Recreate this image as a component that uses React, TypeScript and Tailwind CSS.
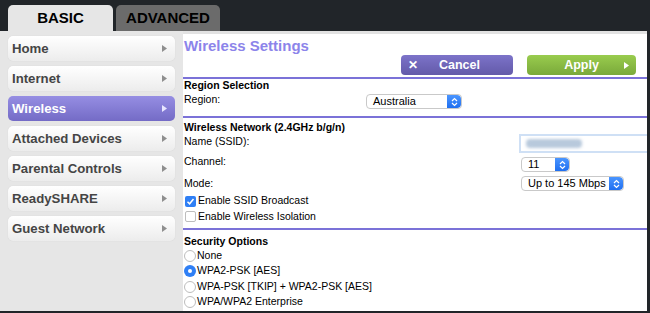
import React from "react";

const Arrow = ({ color = "#8a8a8a", w = 5, h = 7 }: { color?: string; w?: number; h?: number }) => (
  <svg width={w} height={h} viewBox={`0 0 ${w} ${h}`}><path d={`M0 0 L${w} ${h / 2} L0 ${h} Z`} fill={color} /></svg>
);

const Stepper = () => (
  <div className="w-[14px] self-stretch rounded-r-[4px] bg-gradient-to-b from-[#4a95ff] to-[#1f6ff0] flex items-center justify-center">
    <svg width="7" height="10" viewBox="0 0 7 10">
      <path d="M1 4 L3.5 1.5 L6 4 M1 6 L3.5 8.5 L6 6" stroke="white" strokeWidth="1.2" fill="none" />
    </svg>
  </div>
);

const Select = ({ w, text, extra = "" }: { w: string; text: string; extra?: string }) => (
  <div className={`${w} ${extra} h-[15px] flex items-stretch rounded-[4px] border border-[#c9c9c9] bg-white text-[11px] text-black overflow-hidden`}>
    <div className="flex-1 flex items-center pl-[6px]">{text}</div>
    <Stepper />
  </div>
);

const menu = ["Home", "Internet", "Wireless", "Attached Devices", "Parental Controls", "ReadySHARE", "Guest Network"];

const Line = () => <div className="h-[2px] bg-[#7b72d8] shrink-0" />;

const Radio = ({ checked, label }: { checked?: boolean; label: string }) => (
  <div className="h-[15.5px] flex items-center gap-[1px]">
    {checked ? (
      <div className="w-[12px] h-[12px] rounded-full bg-[#2f7ff5] flex items-center justify-center">
        <div className="w-[4px] h-[4px] rounded-full bg-white" />
      </div>
    ) : (
      <div className="w-[12px] h-[12px] rounded-full border border-[#bdbdbd] bg-white" />
    )}
    <span>{label}</span>
  </div>
);

export default function App() {
  return (
    <div className="w-[650px] h-[313px] overflow-hidden bg-[#212529] flex flex-col" style={{ fontFamily: '"Liberation Sans", Arial, sans-serif' }}>
      <div className="h-[31px] flex items-end pl-[8px] gap-[3px] shrink-0">
        <div className="w-[105px] h-[26px] rounded-t-[5px] bg-[#e6e6e6] flex items-center justify-center text-[15px] font-bold text-black">BASIC</div>
        <div className="w-[104px] h-[26px] rounded-t-[5px] bg-[#6b6b6b] flex items-center justify-center text-[15px] font-bold text-black">ADVANCED</div>
      </div>
      <div className="flex-1 flex mr-[3px] mb-[2px] min-h-0">
        <div className="w-[183px] bg-[#e6e6e6] shrink-0 flex flex-col gap-[5px] pt-[5px] pl-[8px] pr-[8px]">
          {menu.map((m) => {
            const active = m === "Wireless";
            return (
              <div
                key={m}
                className={`h-[25px] rounded-[5px] flex items-center justify-between pl-[4px] pr-[8px] text-[13.2px] font-bold ${
                  active
                    ? "bg-gradient-to-b from-[#968ee3] to-[#746bc6] text-white"
                    : "bg-gradient-to-b from-white to-[#ececec] text-[#454545] shadow-[0_0_1px_rgba(0,0,0,0.15)]"
                }`}
              >
                <span>{m}</span>
                <Arrow color={active ? "#e8e6ff" : "#8f8f8f"} />
              </div>
            );
          })}
        </div>
        <div className="flex-1 bg-white border-t-[3px] border-[#e2e2e2] flex flex-col text-[10.5px] text-black min-w-0">
          <div className="h-[21px] shrink-0 pl-[1px] pt-[4px] text-[15px] font-bold text-[#8c84ea] leading-none">Wireless Settings</div>
          <div className="h-[22px] shrink-0 flex items-start justify-end pr-[11px] gap-[14px]">
            <div className="w-[112px] h-[20px] rounded-[4px] bg-gradient-to-b from-[#7c73c9] to-[#635aa9] flex items-center pl-[7px] pr-[6px] text-white font-bold text-[12.5px]">
              <span className="text-[12px]">✕</span>
              <span className="flex-1 text-center pr-[6px]">Cancel</span>
            </div>
            <div className="w-[109px] h-[20px] rounded-[4px] bg-gradient-to-b from-[#99cc4e] to-[#7aa93a] flex items-center pl-[6px] pr-[7px] text-white font-bold text-[12.5px]">
              <span className="flex-1 text-center pl-[6px]">Apply</span>
              <Arrow color="#ffffff" />
            </div>
          </div>
          <Line />
          <div className="pl-[1px] h-[14px] shrink-0 flex items-center font-bold">Region Selection</div>
          <div className="pl-[1px] h-[17px] shrink-0 flex items-start">
            <span className="w-[182px] leading-[13px]">Region:</span>
            <Select w="w-[96px]" text="Australia" extra="mt-[1px]" />
          </div>
          <div className="h-[6px] shrink-0" />
          <Line />
          <div className="pl-[1px] h-[16px] shrink-0 flex items-center pt-[3px] font-bold">Wireless Network (2.4GHz b/g/n)</div>
          <div className="pl-[1px] h-[19px] shrink-0 flex items-start">
            <span className="w-[335px] leading-[13px] mt-[1px]">Name (SSID):</span>
            <div className="flex-1 h-[19px] border-2 border-r-0 border-[#cfe0f5] bg-white flex items-center pl-[5px]">
              <div className="w-[56px] h-[9px] rounded bg-[#b8c9dc] blur-[1.5px]" />
            </div>
          </div>
          <div className="pl-[1px] h-[21px] shrink-0 flex items-start">
            <span className="w-[337px] leading-[13px] mt-[2px]">Channel:</span>
            <Select w="w-[49px]" text="11" extra="mt-[4px]" />
          </div>
          <div className="pl-[1px] h-[19px] shrink-0 flex items-start">
            <span className="w-[337px] leading-[13px] mt-[3px]">Mode:</span>
            <Select w="w-[103px]" text="Up to 145 Mbps" extra="mt-[2px]" />
          </div>
          <div className="pl-[2px] h-[16px] shrink-0 flex items-center gap-[2px]">
            <div className="w-[11px] h-[11px] rounded-[2px] bg-[#2f7ff5] flex items-center justify-center">
              <svg width="9" height="9" viewBox="0 0 9 9"><path d="M1.5 4.8 L3.6 6.8 L7.5 2" stroke="white" strokeWidth="1.5" fill="none" /></svg>
            </div>
            <span>Enable SSID Broadcast</span>
          </div>
          <div className="pl-[2px] h-[15px] shrink-0 flex items-center gap-[2px]">
            <div className="w-[11px] h-[11px] rounded-[2px] border border-[#bdbdbd] bg-white" />
            <span>Enable Wireless Isolation</span>
          </div>
          <div className="h-[4px] shrink-0" />
          <Line />
          <div className="pl-[1px] h-[18px] shrink-0 flex items-center pt-[5px] font-bold">Security Options</div>
          <div className="pl-[1px] flex flex-col">
            <Radio label="None" />
            <Radio checked label="WPA2-PSK [AES]" />
            <Radio label="WPA-PSK [TKIP] + WPA2-PSK [AES]" />
            <Radio label="WPA/WPA2 Enterprise" />
          </div>
        </div>
      </div>
    </div>
  );
}
